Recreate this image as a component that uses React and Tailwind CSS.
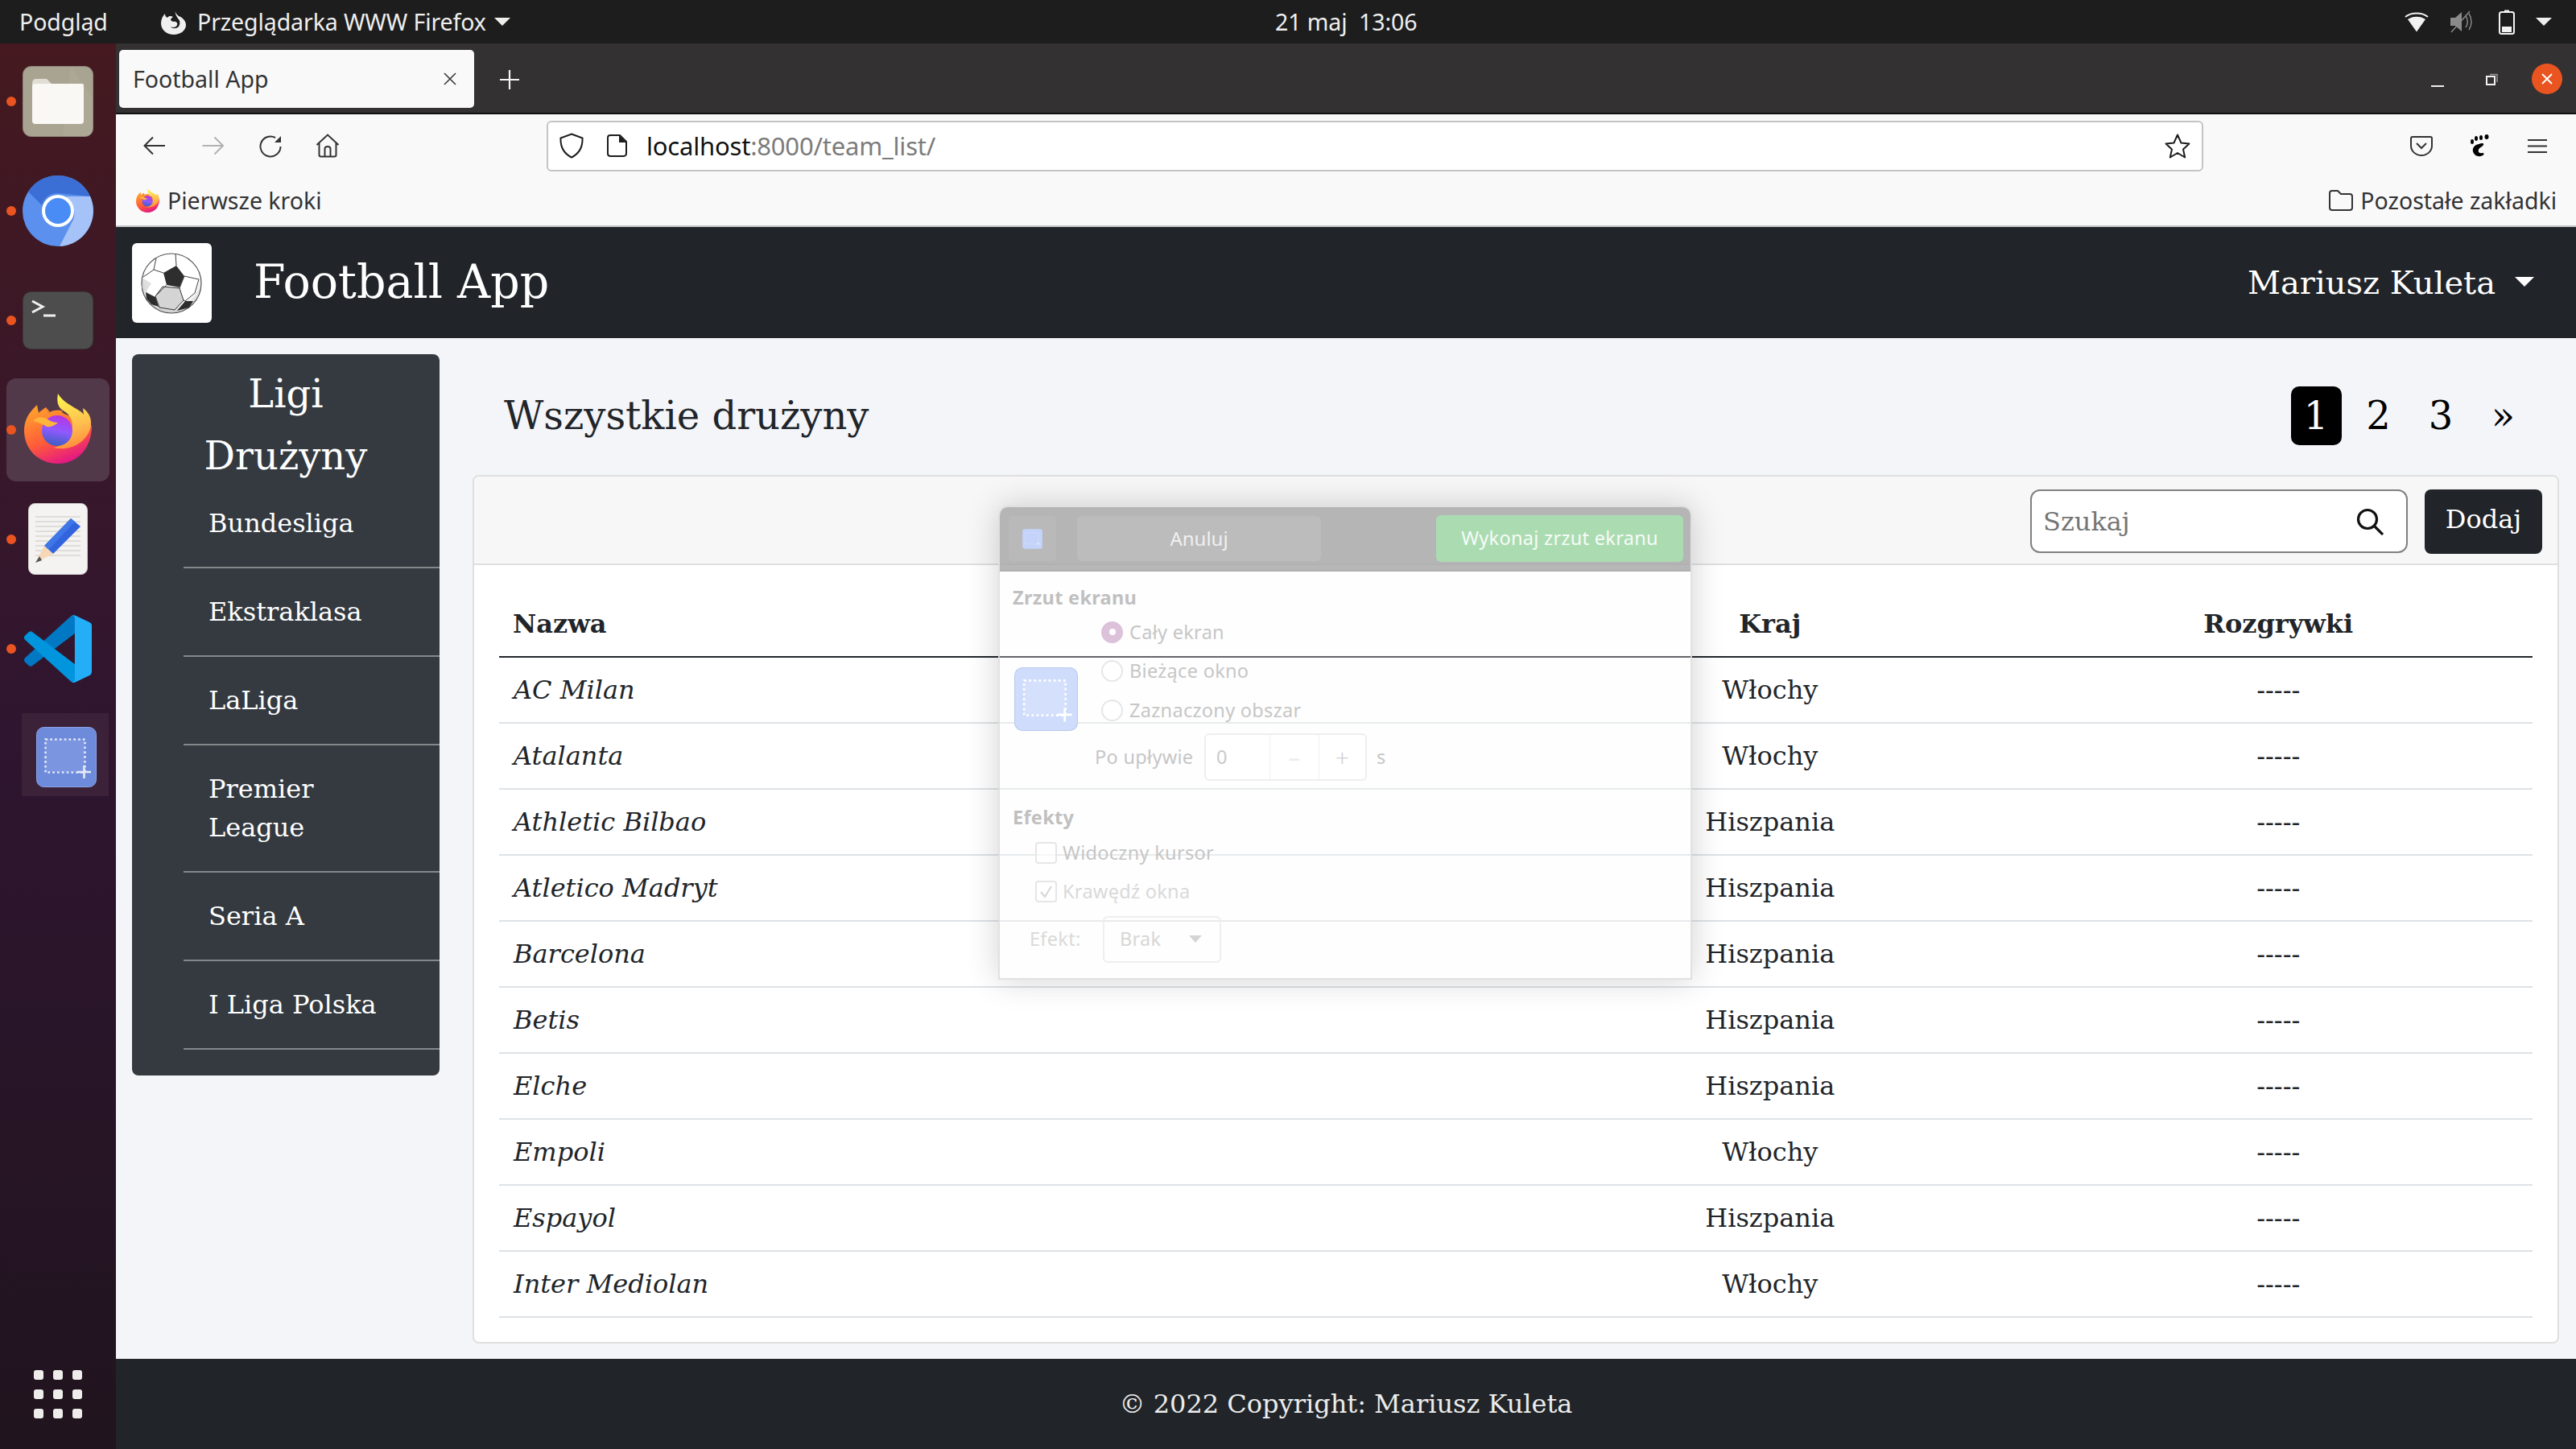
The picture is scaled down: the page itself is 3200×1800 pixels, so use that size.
import React from 'react';

const TEAMS = [
  ['AC Milan', 'Włochy'], ['Atalanta', 'Włochy'], ['Athletic Bilbao', 'Hiszpania'], ['Atletico Madryt', 'Hiszpania'],
  ['Barcelona', 'Hiszpania'], ['Betis', 'Hiszpania'], ['Elche', 'Hiszpania'], ['Empoli', 'Włochy'],
  ['Espayol', 'Hiszpania'], ['Inter Mediolan', 'Włochy'],
];
const LEAGUES = ['Bundesliga', 'Ekstraklasa', 'LaLiga', 'Premier League', 'Seria A', 'I Liga Polska'];

const Tri = ({ w = 20, h = 10, c = '#eeeeec', className = '' }) => (
  <svg width={w} height={h} viewBox="0 0 20 10" preserveAspectRatio="none" className={className}><path d="M0 0H20L10 10Z" fill={c} /></svg>
);

const FirefoxLogo = ({ size = 84 }) => (
  <svg width={size} height={size * 87 / 84} viewBox="0 0 84 87">
    <defs>
      <linearGradient id="ffa" x1="0.2" y1="0.1" x2="0.6" y2="1"><stop offset="0" stopColor="#ff9a2e" /><stop offset="0.55" stopColor="#ff5a3a" /><stop offset="1" stopColor="#e31587" /></linearGradient>
      <linearGradient id="ffb" x1="0.4" y1="0" x2="0.6" y2="1"><stop offset="0" stopColor="#fff44f" /><stop offset="0.6" stopColor="#ffbd4f" /><stop offset="1" stopColor="#ff8a3a" /></linearGradient>
      <linearGradient id="ffc" x1="0.6" y1="0" x2="0.4" y2="1"><stop offset="0" stopColor="#b833e1" /><stop offset="0.5" stopColor="#9059ff" /><stop offset="1" stopColor="#3a5fc0" /></linearGradient>
    </defs>
    <path d="M42 87C18 87 0 69 0 46C0 34 5 24 16 14L18 24L27 17L30 24C36 21 44 21 50 25L84 40C84 68 66 87 42 87Z" fill="url(#ffa)" />
    <path d="M42 0C40 10 42 18 50 22C60 28 62 40 58 50C54 60 46 66 36 67C56 72 76 62 82 44C85 34 82 24 73 18L74 26C68 18 50 14 42 0Z" fill="url(#ffb)" />
    <circle cx="41" cy="46" r="19" fill="url(#ffc)" />
    <path d="M11 34C16 28 24 28 31 33C36 36 42 36 42 36C38 40 32 42 28 41C24 38 18 36 11 34Z" fill="#ffb53a" />
    <path d="M17 24C22 18 26 20 31 24C36 28 44 26 48 22C44 20 38 20 32 23L27 17Z" fill="#ff8a2e" />
  </svg>
);

const ShotIcon = ({ w = 75, bg = '#6d8adb', hi = '#7b95e0', fg = '#e6e9f6', border = '#8ba3e8' }) => (
  <svg width={w} height={w} viewBox="0 0 75 75">
    <rect x="0.5" y="0.5" width="74" height="74" rx="9" fill={bg} stroke={border} />
    <rect x="11" y="15" width="49" height="41" fill={hi} />
    <rect x="11.5" y="15.5" width="49" height="41" fill="none" stroke={fg} strokeWidth="2.6" strokeDasharray="2.6 3.2" />
    <path d="M51 56H68M59.500 48V64" stroke={fg} strokeWidth="2.600" fill="none" />
  </svg>
);

const Ball = () => (
  <svg width="99" height="99" viewBox="0 0 99 99">
    <defs><radialGradient id="bl" cx="0.5" cy="0.4" r="0.6"><stop offset="0.75" stopColor="#ffffff" /><stop offset="1" stopColor="#c8c8c8" /></radialGradient></defs>
    <ellipse cx="49" cy="50" rx="37" ry="37" fill="url(#bl)" stroke="#555" strokeWidth="1.200" />
    <path d="M38 54L59 56L64 71L53 83L34 80L29 66Z" fill="#d4d4d4" stroke="#333" strokeWidth="1" />
    <path d="M39 37L55 28L65 41L59 55L43 52Z" fill="#2e2e2e" />
    <path d="M17 61L29 67L33 79L24 76L18 69Z" fill="#2c2c2c" />
    <path d="M66 72L76 72L71 80L56 84Z" fill="#2c2c2c" />
    <path d="M55 28L54 13M65 41L83 45M39 37L27 33L14 42M27 33L30 19M43 52L29 66M64 71L66 72M59 56L65 41M83 45L78 62L66 72" stroke="#444" strokeWidth="1" fill="none" />
    <path d="M14 44L12 55L17 61L24 50Z" fill="#c9c9c9" opacity="0.6" />
  </svg>
);

const Radio = ({ on }) => (
  <span className={`flex w-[27px] h-[27px] rounded-full items-center justify-center border-2 ${on ? 'bg-[#dcc1da] border-[#dcc1da]' : 'bg-white border-[#e6e6e6]'}`}>
    {on && <span className="w-[8px] h-[8px] rounded-full bg-white" />}
  </span>
);

const DIALOG_FONT = "font-['Noto_Sans',sans-serif]";

function Dialog() {
  return (
    <div className={`absolute left-[1240px] top-[628px] w-[862px] h-[589px] rounded-t-[12px] border-2 border-[#d9d9d9]/80 bg-[#fbfbfb]/30 shadow-[0_0_40px_rgba(0,0,0,0.18)] flex flex-col ${DIALOG_FONT}`}>
      <div className="h-[80px] shrink-0 bg-[#9f9f9f]/75 rounded-t-[10px] flex items-center pl-[11px] pr-[9px] border-b-2 border-[#b0b0b0]">
        <div className="w-[59px] h-[56px] rounded-[6px] bg-[#b9b9b9] flex items-center justify-center"><ShotIcon w={25} bg="#c4d3f9" hi="#c4d3f9" fg="#dfe6fb" border="#c4d3f9" /></div>
        <div className="ml-[26px] w-[303px] h-[56px] rounded-[6px] bg-[#bcbcbc] flex items-center justify-center text-[24px] text-[#f0f0f0]">Anuluj</div>
        <div className="ml-auto w-[307px] h-[58px] rounded-[6px] bg-[#abdcb1] flex items-center justify-center text-[23.500px] tracking-[0.3px] text-[#f8fbf8]">Wykonaj zrzut ekranu</div>
      </div>
      <div className="relative flex-1 pl-[16px] pt-[17px] text-[23.500px] tracking-[0.3px] text-[#c6c6c6]">
        <div className="font-bold text-[#c0c0c0] leading-[30px]">Zrzut ekranu</div>
        <div className="flex mt-[4px]">
          <div className="w-[79px] ml-[2px] pt-[68px] shrink-0"><ShotIcon w={79} bg="#cfdcfb" hi="#d4e0fc" fg="#ffffff" border="#b9c9ec" /></div>
          <div className="ml-[21px] flex flex-col">
            {[['Cały ekran', true], ['Bieżące okno', false], ['Zaznaczony obszar', false]].map(([t, on]) => (
              <div key={t} className="h-[48.500px] flex items-center gap-[8px] ml-[8px]"><Radio on={on} /><span>{t}</span></div>
            ))}
            <div className="flex items-center h-[60px] mt-[4px]">
              <span className="w-[136px]">Po upływie</span>
              <div className="w-[202px] h-[59px] rounded-[6px] border-2 border-[#eeeeee] bg-white/60 flex items-center text-[#c9c9c9]">
                <span className="w-[79px] pl-[13px]">0</span>
                <span className="w-[61px] h-full border-l border-[#f0f0f0] flex items-center justify-center text-[#ececec] text-[30px]">–</span>
                <span className="flex-1 h-full border-l border-[#f0f0f0] flex items-center justify-center text-[#d0d0d0] text-[30px] font-light">+</span>
              </div>
              <span className="ml-[12px]">s</span>
            </div>
          </div>
        </div>
        <div className="font-bold text-[#c0c0c0] leading-[30px] mt-[29px]">Efekty</div>
        <div className="ml-[28px] mt-[6px] flex flex-col">
          <div className="h-[48px] flex items-center gap-[7px]"><span className="block w-[27px] h-[27px] rounded-[4px] border-2 border-[#e6e6e6] bg-white/60" /><span>Widoczny kursor</span></div>
          <div className="h-[48px] flex items-center gap-[7px] text-[#d9d9d9]">
            <span className="flex w-[27px] h-[27px] rounded-[4px] border-2 border-[#e6e6e6] bg-white/60 items-center justify-center">
              <svg width="19" height="19" viewBox="0 0 19 19"><path d="M3 10L8 16L16 3" stroke="#d6d6d6" strokeWidth="2" fill="none" /></svg>
            </span>
            <span>Krawędź okna</span>
          </div>
        </div>
        <div className="ml-[21px] mt-[6px] flex items-center text-[#dadada]">
          <span className="w-[91px]">Efekt:</span>
          <div className="w-[147px] h-[58px] rounded-[6px] border-2 border-[#eeeeee] flex items-center justify-between pl-[19px] text-[#d6d6d6]">
            <span>Brak</span><Tri w={16} h={9} c="#d4d4d4" className="mr-[22px]" />
          </div>
        </div>
      </div>
    </div>
  );
}

function TopBar() {
  return (
    <div className="h-[54px] shrink-0 bg-[#1d1d1d] flex items-center relative text-[#efefef] text-[28.500px] tracking-[-0.100px] font-['Noto_Sans',sans-serif]">
      <span className="ml-[24px] w-[176px]">Podgląd</span>
      <svg width="31" height="31" viewBox="0 0 31 31">
        <path d="M18 0C17 4 20 6 22 8C27 10 31 14 31 19C31 26 24 31 16 31C7 31 0 25 0 17C0 12 2 8 5 5C5 8 6 9 8 10C10 7 13 8 15 9C13 10 12 12 12 13C13 14 15 15 15 15C19 14 21 17 20 19C19 22 15 23 12 21C14 24 19 24 22 21C24 18 24 13 21 11C19 8 17 4 18 0Z" fill="#efefef" />
      </svg>
      <span className="ml-[14px]">Przeglądarka WWW Firefox</span>
      <Tri className="ml-[10px]" />
      <span className="absolute left-[1584px] whitespace-pre">21 maj  13:06</span>
      <div className="ml-auto flex items-center pr-[30px]">
        <svg width="30" height="26" viewBox="0 0 30 26"><path d="M1 7C8 1 22 1 29 7" stroke="#f2f2f2" strokeWidth="2" fill="none" /><path d="M15 25.500L4 10C10 5.500 20 5.500 26 10Z" fill="#f2f2f2" /></svg>
        <svg className="ml-[26px]" width="30" height="28" viewBox="0 0 30 28">
          <path d="M1 9H7L15 2V26L7 19H1Z" fill="#8a8a8a" /><path d="M20 7C23 11 23 17 20 21M24 4C28 10 28 18 24 24" stroke="#8a8a8a" strokeWidth="1.500" fill="none" /><path d="M2 27L25 1" stroke="#8a8a8a" strokeWidth="1.500" />
        </svg>
        <svg className="ml-[31px]" width="20" height="31" viewBox="0 0 20 31"><path d="M7 0.500H13V3H7Z" fill="#f2f2f2" /><rect x="1" y="3" width="18" height="27" rx="2.500" fill="none" stroke="#f2f2f2" strokeWidth="2" /><rect x="4" y="21" width="12" height="7" fill="#f2f2f2" /></svg>
        <Tri className="ml-[26px]" />
      </div>
    </div>
  );
}

function Dock() {
  return (
    <div className="w-[144px] shrink-0 h-full relative bg-gradient-to-b from-[#45191f] via-[#2f1530] to-[#20141e] flex flex-col items-center">
      <div className="h-[28px]" />
      <svg width="88" height="88" viewBox="0 0 88 88">
        <rect x="0.500" y="0.500" width="87" height="87" rx="10" fill="#a9a391" stroke="#8f897a" />
        <path d="M60 0.500L87 40V78C87 84 84 87 78 87H50Z" fill="#b1ab9a" opacity="0.6" />
        <path d="M12 22C12 18 14 16 17 16H30L36 22H76V60H12Z" fill="#e0ddd3" />
        <rect x="12" y="22" width="64" height="50" rx="4" fill="#faf8f5" />
      </svg>
      <svg className="mt-[48px]" width="88" height="88" viewBox="0 0 88 88">
        <circle cx="44" cy="44" r="44" fill="#5b90ee" />
        <path d="M44 0A44 44 0 0 1 84 26L44 22C34 22 27 27 24 37L7 20A44 44 0 0 1 44 0Z" fill="#3c6fd5" />
        <path d="M84 26A44 44 0 0 1 46 88L63 55C67 44 62 32 54 26Z" fill="#a5c3f9" />
        <circle cx="44" cy="44" r="20" fill="#ffffff" />
        <circle cx="44" cy="44" r="16" fill="#4a8cf6" />
      </svg>
      <svg className="mt-[56px]" width="88" height="72" viewBox="0 0 88 72">
        <rect x="0.500" y="0.500" width="87" height="71" rx="10" fill="#4d4d4d" stroke="#3a3a3a" />
        <path d="M12 12L25 19L12 26" stroke="#f0f0f0" strokeWidth="3" fill="none" />
        <path d="M26 30H41" stroke="#f0f0f0" strokeWidth="3" />
      </svg>
      <div className="mt-[36px] w-[128px] h-[128px] rounded-[12px] bg-[#52394a] flex items-center justify-center pb-[3px]"><FirefoxLogo /></div>
      <svg className="mt-[27px]" width="74" height="89" viewBox="0 0 74 89">
        <rect x="0.500" y="0.500" width="73" height="88" rx="8" fill="#f4f3f1" stroke="#cfcdc9" />
        <path d="M9 17H65M9 23H65M9 29H65M9 35H65M9 41H65M9 47H65M9 53H65M9 59H65M9 65H65" stroke="#d8d6d2" strokeWidth="1.500" />
        <path d="M20 53L53 19L65 29L31 63Z" fill="#3264de" />
        <path d="M20 53L53 19L58 23L25 58Z" fill="#4077e8" />
        <path d="M20 53L31 63L9 74Z" fill="#f6d8b8" />
        <path d="M14 66L9 74L17 71Z" fill="#555" />
      </svg>
      <svg className="mt-[50px]" width="84" height="84" viewBox="0 0 100 100">
        <path d="M96.400 10.800L75.800 0.900A6.200 6.200 0 0 0 68.700 2.100L1.300 63.500A4.200 4.200 0 0 0 1.300 69.700L6.800 74.700A4.200 4.200 0 0 0 12.100 74.900L93.200 13.400A4.100 4.100 0 0 1 100 16.700V16.500A6.200 6.200 0 0 0 96.400 10.800Z" fill="#0078c4" />
        <path d="M96.400 89.200L75.800 99.100A6.200 6.200 0 0 1 68.700 97.900L1.300 36.500A4.200 4.200 0 0 1 1.300 30.300L6.800 25.300A4.200 4.200 0 0 1 12.100 25.100L93.200 86.600A4.100 4.100 0 0 0 100 83.300V83.500A6.200 6.200 0 0 1 96.400 89.200Z" fill="#0095dc" />
        <path d="M75.800 99.100A6.200 6.200 0 0 1 68.700 97.900C71 100.200 74.900 98.600 74.900 95.300V4.700C74.900 1.400 71 -0.200 68.700 2.100A6.200 6.200 0 0 1 75.800 0.900L96.400 10.800A6.200 6.200 0 0 1 100 16.400V83.600A6.200 6.200 0 0 1 96.400 89.200Z" fill="#24aef8" />
      </svg>
      <div className="mt-[38px] ml-[18px] w-[108px] h-[103px] bg-[#3c2238] flex items-center justify-center pt-[6px] pl-[2px]"><ShotIcon /></div>
      <div className="absolute left-[42px] top-[1648px] grid grid-cols-3 gap-[12px]">
        {Array.from({ length: 9 }).map((_, i) => <span key={i} className="block w-[12px] h-[12px] rounded-[3px] bg-[#eeedeb]" />)}
      </div>
      {[66, 202, 338, 474, 610, 746].map((y) => <span key={y} className="absolute left-[8px] w-[12px] h-[12px] rounded-full bg-[#e95420]" style={{ top: y }} />)}
    </div>
  );
}

function BrowserChrome() {
  return (
    <div className="shrink-0 font-['Noto_Sans',sans-serif]">
      <div className="h-[88px] bg-[#333132] border-b-2 border-[#111] flex items-start pt-[8px]">
        <div className="ml-[4px] w-[441px] h-[72px] rounded-[5px] bg-[#f9f9fa] flex items-center pl-[17px] pr-[22px] justify-between text-[28.500px] text-[#333]">
          <span>Football App</span>
          <svg width="16" height="16" viewBox="0 0 16 16"><path d="M1 1L15 15M15 1L1 15" stroke="#333" strokeWidth="1.500" /></svg>
        </div>
        <svg className="ml-[32px] mt-[25px]" width="24" height="24" viewBox="0 0 24 24"><path d="M12 0V24M0 12H24" stroke="#f5f5f5" strokeWidth="2.200" /></svg>
        <div className="ml-auto flex items-center h-[72px] pr-[17px]">
          <span className="block w-[16px] h-[2px] bg-[#eee] mt-[18px] mr-[52px]" />
          <svg className="mr-[41px]" width="16" height="16" viewBox="0 0 16 16"><rect x="1" y="5" width="10" height="10" fill="none" stroke="#f0f0f0" strokeWidth="2" /><path d="M5 2.500H14V12" fill="none" stroke="#999" strokeWidth="1.500" /></svg>
          <span className="flex w-[38px] h-[38px] rounded-full bg-[#e95420] items-center justify-center">
            <svg width="14" height="14" viewBox="0 0 14 14"><path d="M1 1L13 13M13 1L1 13" stroke="#fff" strokeWidth="1.800" /></svg>
          </span>
        </div>
      </div>
      <div className="h-[78px] bg-[#f9f9fa] flex items-center pl-[34px]">
        <svg width="28" height="24" viewBox="0 0 28 24"><path d="M27 12H2M12 1.500L1.500 12L12 22.500" stroke="#333" strokeWidth="2" fill="none" /></svg>
        <svg className="ml-[44px]" width="29" height="24" viewBox="0 0 28 24"><path d="M1 12H26M16 1.500L26.500 12L16 22.500" stroke="#b2b2b3" strokeWidth="2" fill="none" /></svg>
        <svg className="ml-[43px]" width="28" height="29" viewBox="0 0 28 29"><path d="M26.500 15A12.500 12.500 0 1 1 20 4" stroke="#333" strokeWidth="2" fill="none" /><path d="M27 2V10H19Z" fill="#333" /></svg>
        <svg className="ml-[42px]" width="30" height="30" viewBox="0 0 30 30"><path d="M1.500 14L15 1.500L28.500 14M4.500 12V26.500C4.500 28 5.500 28.500 6.500 28.500H23.500C24.500 28.500 25.500 28 25.500 26.500V12M11.500 28V19C11.500 15 18.500 15 18.500 19V28" stroke="#333" strokeWidth="2" fill="none" /></svg>
        <div className="ml-[257px] w-[2058px] h-[63px] rounded-[6px] border-2 border-[#c4c4c5] bg-white flex items-center pl-[14px] pr-[14px] text-[31px] tracking-[-0.200px]">
          <svg width="30" height="32" viewBox="0 0 30 32"><path d="M15 1.500L28.500 6.500C29 18 24 26 15 30.500C6 26 1 18 1.500 6.500Z" fill="none" stroke="#1d1d1d" strokeWidth="2" /></svg>
          <svg className="ml-[29px]" width="25" height="28" viewBox="0 0 25 28"><path d="M4 1H16L24 9V24C24 26 22 27 20.500 27H4.500C2.500 27 1 26 1 24V4C1 2 2.500 1 4 1Z" fill="none" stroke="#1d1d1d" strokeWidth="2" /><path d="M15 1V10H24Z" fill="#1d1d1d" /></svg>
          <span className="ml-[24px] text-[#111]">localhost</span><span className="text-[#7b7b7b]">:8000/team_list/</span>
          <svg className="ml-auto" width="32" height="31" viewBox="0 0 32 31"><path d="M16 1.500L20.500 11.500L30.500 12.500L23 19.500L25.200 29.500L16 24L6.800 29.500L9 19.500L1.500 12.500L11.500 11.500Z" fill="none" stroke="#1d1d1d" strokeWidth="2" strokeLinejoin="round" /></svg>
        </div>
        <svg className="ml-[257px]" width="28" height="25" viewBox="0 0 28 25"><path d="M3 1H25C26 1 27 2 27 3V12C27 19 21 24 14 24C7 24 1 19 1 12V3C1 2 2 1 3 1Z" fill="none" stroke="#333" strokeWidth="2" /><path d="M8 9L14 15L20 9" fill="none" stroke="#333" strokeWidth="2" /></svg>
        <svg className="ml-[46px]" width="24" height="28" viewBox="0 0 24 28">
          <path d="M11 12C6 13 3 17 4 21C5 26 11 29 16 26C18 25 18 23 16 23C12 24 10 22 11 19C12 16 15 16 17 13C18 10 14 11 11 12Z" fill="#000" />
          <ellipse cx="3" cy="9" rx="2" ry="3" fill="#000" /><ellipse cx="8" cy="5" rx="2" ry="3" fill="#000" /><ellipse cx="14" cy="4" rx="2" ry="3" fill="#000" /><ellipse cx="21" cy="3" rx="2.500" ry="3" fill="#000" />
        </svg>
        <svg className="ml-[48px]" width="24" height="19" viewBox="0 0 24 19"><path d="M0 2H24M0 9.500H24M0 17H24" stroke="#333" strokeWidth="2.200" /></svg>
      </div>
      <div className="h-[62px] bg-[#f9f9fa] border-b-2 border-[#c8c8c8] flex items-center pl-[25px] pb-[2px] text-[28.500px] text-[#333]">
        <FirefoxLogo size={29} />
        <span className="ml-[10px]">Pierwsze kroki</span>
        <svg className="ml-auto" width="30" height="26" viewBox="0 0 30 26"><path d="M1 4C1 2 2 1 4 1H11L15 5H26C28 5 29 6 29 8V22C29 24 28 25 26 25H4C2 25 1 24 1 22Z" fill="none" stroke="#333" strokeWidth="2" /></svg>
        <span className="ml-[9px] mr-[24px]">Pozostałe zakładki</span>
      </div>
    </div>
  );
}

function Sidebar() {
  return (
    <aside className="w-[382px] h-[896px] shrink-0 mt-[20px] ml-[20px] rounded-[8px] bg-[#343a40] text-white pt-[11px] pb-[31px]">
      <div className="text-center text-[48px] leading-[77px]">
        <div>Ligi</div>
        <div>Drużyny</div>
      </div>
      <ul className="ml-[64px] mt-[-9px]">
        {LEAGUES.map((l) => (
          <li key={l} className="pl-[31px] pr-[50px] py-[30px] border-b-2 border-[#85888b] text-[32px] leading-[48px]">{l}</li>
        ))}
      </ul>
    </aside>
  );
}

function Pagination() {
  return (
    <div className="flex gap-[14.500px] text-[48px] leading-[73px] text-black text-center">
      <span className="w-[63px] h-[73px] rounded-[10px] bg-black text-white">1</span>
      <span className="w-[63px]">2</span>
      <span className="w-[63px]">3</span>
      <span className="w-[63px]">»</span>
    </div>
  );
}

function Card() {
  return (
    <div className="w-[2592px] h-[1079px] rounded-[8px] border-2 border-[#dfdfdf] bg-white overflow-hidden">
      <div className="h-[110px] bg-[#f7f7f7] border-b-2 border-[#dfdfdf] flex items-start justify-end pt-[16px] pr-[19px]">
        <div className="w-[469px] h-[79px] rounded-[12px] border-2 border-[#808080] bg-white flex items-center pl-[14px] pr-[28px] text-[32px] text-[#757575]">
          <span>Szukaj</span>
          <svg className="ml-auto" width="34" height="34" viewBox="0 0 34 34"><circle cx="14" cy="14" r="11.500" fill="none" stroke="#111" strokeWidth="3.200" /><path d="M22 22L33 33" stroke="#111" strokeWidth="3.200" /></svg>
        </div>
        <div className="ml-[21px] w-[146px] h-[80px] rounded-[8px] bg-[#212529] text-white text-[32px] flex items-center justify-center pb-[6px]">Dodaj</div>
      </div>
      <div className="mx-[31px] text-[32px] leading-[48px] text-[#212529]">
        <div className="grid grid-cols-[2fr_1fr_1fr] pt-[49px] pb-[16px] border-b-2 border-[#212529] font-bold text-center">
          <div className="text-left pl-[17px]">Nazwa</div><div>Kraj</div><div>Rozgrywki</div>
        </div>
        {TEAMS.map(([n, k]) => (
          <div key={n} className="grid grid-cols-[2fr_1fr_1fr] py-[16px] border-b-2 border-[#dee2e6] text-center">
            <div className="text-left pl-[18px] italic">{n}</div><div>{k}</div><div>-----</div>
          </div>
        ))}
      </div>
    </div>
  );
}

export default function App() {
  return (
    <div className="relative w-[3200px] h-[1800px] overflow-hidden flex flex-col bg-[#f4f5f9]">
      <TopBar />
      <div className="flex flex-1 min-h-0">
        <Dock />
        <div className="flex-1 min-w-0 flex flex-col">
          <BrowserChrome />
          <div className="h-[138px] shrink-0 bg-[#212529] flex items-center pl-[20px] pr-[52px] text-white font-['DejaVu_Serif',serif]">
            <div className="w-[99px] h-[99px] rounded-[6px] bg-white"><Ball /></div>
            <span className="ml-[52px] text-[57px]">Football App</span>
            <span className="ml-auto text-[40px]">Mariusz Kuleta</span>
            <Tri w={24} h={12} c="#ffffff" className="ml-[24px] -mt-[2px]" />
          </div>
          <div className="flex-1 min-h-0 flex font-['DejaVu_Serif',serif]">
            <Sidebar />
            <main className="ml-[41px]">
              <div className="h-[170px] flex items-start justify-between pt-[60px] pl-[39px] pr-[38px]">
                <h1 className="text-[48px] leading-[73px] text-[#212529]">Wszystkie drużyny</h1>
                <Pagination />
              </div>
              <Card />
            </main>
          </div>
          <div className="h-[112px] shrink-0 bg-[#212529] flex items-center justify-center text-[32px] text-[#ececec] font-['DejaVu_Serif',serif]">© 2022 Copyright: Mariusz Kuleta</div>
        </div>
      </div>
      <Dialog />
    </div>
  );
}
